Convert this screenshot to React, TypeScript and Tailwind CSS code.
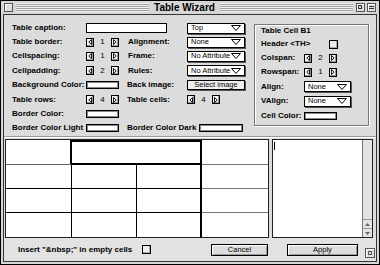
import React from 'react';

const label = "text-[8px] font-bold leading-none text-black whitespace-nowrap";

function Arrow({ dir }: { dir: 'l' | 'r' }) {
  return (
    <span className="flex h-[9px] w-[8px] items-center justify-center border border-black bg-[#f4f4f4] shadow-[inset_-1px_-1px_0_#999]">
      <svg width="4" height="6" viewBox="0 0 4 6">
        {dir === 'l' ? (
          <path d="M3.5 0.5 L0.8 3 L3.5 5.5 Z" fill="none" stroke="black" strokeWidth="0.9" />
        ) : (
          <path d="M0.5 0.5 L3.2 3 L0.5 5.5 Z" fill="none" stroke="black" strokeWidth="0.9" />
        )}
      </svg>
    </span>
  );
}

function Stepper({ value }: { value: string }) {
  return (
    <div className="flex items-center">
      <Arrow dir="l" />
      <span className="w-[17px] text-center text-[8px] leading-none">{value}</span>
      <Arrow dir="r" />
    </div>
  );
}

function Select({ text, w = 'w-[58px]' }: { text: string; w?: string }) {
  return (
    <div className={`flex h-[11px] ${w} items-center justify-between border border-black bg-white pl-[3px] pr-[3px] shadow-[1px_1px_0_#555]`}>
      <span className="text-[7.5px] leading-none">{text}</span>
      <svg width="10" height="6" viewBox="0 0 10 6">
        <path d="M0.5 0.5 H9.5 L5 5.5 Z" fill="none" stroke="black" strokeWidth="1" />
      </svg>
    </div>
  );
}

function Well({ w = 'w-[33px]' }: { w?: string }) {
  return <div className={`h-[8px] ${w} shrink-0 border border-black bg-white shadow-[inset_1px_1px_0_#888,inset_-1px_-1px_0_#888]`} />;
}

function Check() {
  return <div className="h-[9px] w-[9px] border border-black bg-[#eee] shadow-[inset_-1px_-1px_0_#aaa]" />;
}

function Row({ h, children }: { h: string; children: React.ReactNode }) {
  return <div className={`flex ${h} items-center`}>{children}</div>;
}

export default function App() {
  return (
    <div className="h-[265px] w-[380px] overflow-hidden bg-white font-['Liberation_Sans',Arial,sans-serif]">
      <div className="flex h-[265px] w-[380px] flex-col border border-black bg-[#d6d6d6] px-[2px] pb-[2px]">
        {/* title bar */}
        <div className="flex h-[13px] items-center px-[1px]">
          <div className="h-[9px] w-[9px] border border-[#555] bg-[#ddd] shadow-[inset_1px_1px_0_#fff]" />
          <div className="mx-[3px] flex h-[9px] flex-1 items-center bg-[repeating-linear-gradient(to_bottom,#f2f2f2_0px,#f2f2f2_1px,#a0a0a0_1px,#a0a0a0_2px)]">
            <div className="mx-auto bg-[#d6d6d6] px-[5px] text-[10px] font-bold leading-[10px]">Table Wizard</div>
          </div>
          <div className="flex gap-[2px]">
            <div className="h-[9px] w-[9px] border border-[#555] bg-[#ddd] shadow-[inset_1px_1px_0_#fff]">
              <div className="ml-[1px] mt-[1px] h-[4px] w-[4px] border border-[#333]" />
            </div>
            <div className="flex h-[9px] w-[9px] items-center border border-[#555] bg-[#ddd] shadow-[inset_1px_1px_0_#fff]">
              <div className="mx-[1px] h-[3px] w-full border-y border-[#333]" />
            </div>
          </div>
        </div>

        {/* content */}
        <div className="flex flex-1 flex-col border border-[#333] bg-[#dcdcdc]">
          <div className="flex h-[121px] pl-[8px] pt-[6px]">
            {/* left grid */}
            <div className="flex w-[242px] flex-col">
              <Row h="h-[14px]">
                <span className={`${label} w-[74px]`}>Table caption:</span>
                <div className="h-[10px] w-[81px] border border-black bg-white" />
                <span className="w-[20px]" />
                <Select text="Top" />
              </Row>
              <Row h="h-[14px]">
                <span className={`${label} w-[74px]`}>Table border:</span>
                <div className="w-[42px]"><Stepper value="1" /></div>
                <span className={`${label} w-[59px]`}>Alignment:</span>
                <Select text="None" />
              </Row>
              <Row h="h-[14px]">
                <span className={`${label} w-[74px]`}>Cellspacing:</span>
                <div className="w-[42px]"><Stepper value="1" /></div>
                <span className={`${label} w-[59px]`}>Frame:</span>
                <Select text="No Attribute" />
              </Row>
              <Row h="h-[15px]">
                <span className={`${label} w-[74px]`}>Cellpadding:</span>
                <div className="w-[42px]"><Stepper value="2" /></div>
                <span className={`${label} w-[59px]`}>Rules:</span>
                <Select text="No Attribute" />
              </Row>
              <Row h="h-[14px]">
                <span className={`${label} w-[74px]`}>Background Color:</span>
                <div className="w-[41px]"><Well /></div>
                <span className={`${label} w-[60px]`}>Back image:</span>
                <div className="flex h-[10px] w-[58px] items-center justify-center border border-black bg-[#eee] shadow-[1px_1px_0_#555] text-[7.5px] leading-none">
                  Select image
                </div>
              </Row>
              <Row h="h-[15px]">
                <span className={`${label} w-[74px]`}>Table rows:</span>
                <div className="w-[41px]"><Stepper value="4" /></div>
                <span className={`${label} w-[60px]`}>Table cells:</span>
                <Stepper value="4" />
              </Row>
              <Row h="h-[14px]">
                <span className={`${label} w-[74px]`}>Border Color:</span>
                <Well />
              </Row>
              <Row h="h-[14px]">
                <span className={`${label} w-[74px]`}>Border Color Light</span>
                <div className="w-[41px]"><Well /></div>
                <span className={`${label} mr-[3px] shrink-0`}>Border Color Dark</span>
                <Well w="w-[44px]" />
              </Row>
            </div>

            {/* cell panel */}
            <div className="mt-[3px] flex h-[102px] w-[115px] flex-col border border-[#777] pl-[6px] shadow-[1px_1px_0_#fff,inset_1px_1px_0_#fff]">
              <div className="flex h-[12px] items-center">
                <span className={label}>Table Cell B1</span>
              </div>
              <Row h="h-[14px]">
                <span className={`${label} w-[68px]`}>Header &lt;TH&gt;</span>
                <Check />
              </Row>
              <Row h="h-[14px]">
                <span className={`${label} w-[43px]`}>Colspan:</span>
                <Stepper value="2" />
              </Row>
              <Row h="h-[14px]">
                <span className={`${label} w-[43px]`}>Rowspan:</span>
                <Stepper value="1" />
              </Row>
              <Row h="h-[15px]">
                <span className={`${label} w-[43px]`}>Align:</span>
                <Select text="None" w="w-[47px]" />
              </Row>
              <Row h="h-[14px]">
                <span className={`${label} w-[43px]`}>VAlign:</span>
                <Select text="None" w="w-[47px]" />
              </Row>
              <Row h="h-[15px]">
                <span className={`${label} w-[43px]`}>Cell Color:</span>
                <Well />
              </Row>
            </div>
          </div>

          {/* separator */}
          <div className="h-[1px] bg-[#999]" />
          <div className="h-[1px] bg-white" />

          {/* panes */}
          <div className="mt-[1px] flex h-[99px] gap-[3px] pl-[1px] pr-[3px]">
            <div className="h-full w-[264px] border border-[#222] bg-white">
              <div className="grid h-full grid-cols-[66px_65px_65px_1fr] grid-rows-[25px_24px_24px_1fr]">
                <div className="border-b border-r-2 border-b-[#666] border-r-black" />
                <div className="col-span-2 border-2 border-l-0 border-black" />
                <div className="border-b border-[#777]" />
                <div className="border-b border-r border-black" />
                <div className="border-b border-r border-black" />
                <div className="border-b border-r-2 border-black" />
                <div className="border-b border-[#777]" />
                <div className="border-b border-r border-black" />
                <div className="border-b border-r border-black" />
                <div className="border-b border-r-2 border-black" />
                <div className="border-b border-[#777]" />
                <div className="border-r border-black" />
                <div className="border-r border-black" />
                <div className="border-r-2 border-black" />
                <div />
              </div>
            </div>
            <div className="flex h-full flex-1 border border-[#222] bg-white">
              <div className="flex-1 pl-[1px] pt-[2px]">
                <div className="h-[8px] w-[1px] bg-black" />
              </div>
              <div className="flex w-[10px] flex-col justify-end border-l border-[#777] bg-[#e4e4e4]">
                <div className="flex h-[9px] items-center justify-center border-t border-[#999]">
                  <svg width="5" height="3" viewBox="0 0 5 3"><path d="M0 3 L2.5 0 L5 3 Z" fill="#666" /></svg>
                </div>
                <div className="flex h-[9px] items-center justify-center border-t border-[#999]">
                  <svg width="5" height="3" viewBox="0 0 5 3"><path d="M0 0 L2.5 3 L5 0 Z" fill="#666" /></svg>
                </div>
              </div>
            </div>
          </div>

          {/* bottom bar */}
          <div className="flex flex-1 items-center bg-[#e2e2e2] pl-[14px]">
            <span className={`${label} w-[124px]`}>Insert "&amp;nbsp;" in empty cells</span>
            <Check />
            <div className="ml-[60px] flex h-[12px] w-[57px] items-center justify-center border border-black bg-[#ddd] shadow-[inset_1px_1px_0_#fff,inset_-1px_-1px_0_#999] text-[7.5px] leading-none">
              Cancel
            </div>
            <div className="ml-[19px] flex h-[12px] w-[71px] items-center justify-center border border-black bg-[#ddd] shadow-[inset_1px_1px_0_#fff,inset_-1px_-1px_0_#999] text-[7.5px] leading-none">
              Apply
            </div>
            <div className="ml-[7px] mt-[6px] h-[10px] w-[10px] border border-[#555] bg-[#ddd] shadow-[inset_1px_1px_0_#fff]">
              <div className="ml-[2px] mt-[2px] h-[4px] w-[4px] border border-[#555]" />
            </div>
          </div>
        </div>
      </div>
    </div>
  );
}
